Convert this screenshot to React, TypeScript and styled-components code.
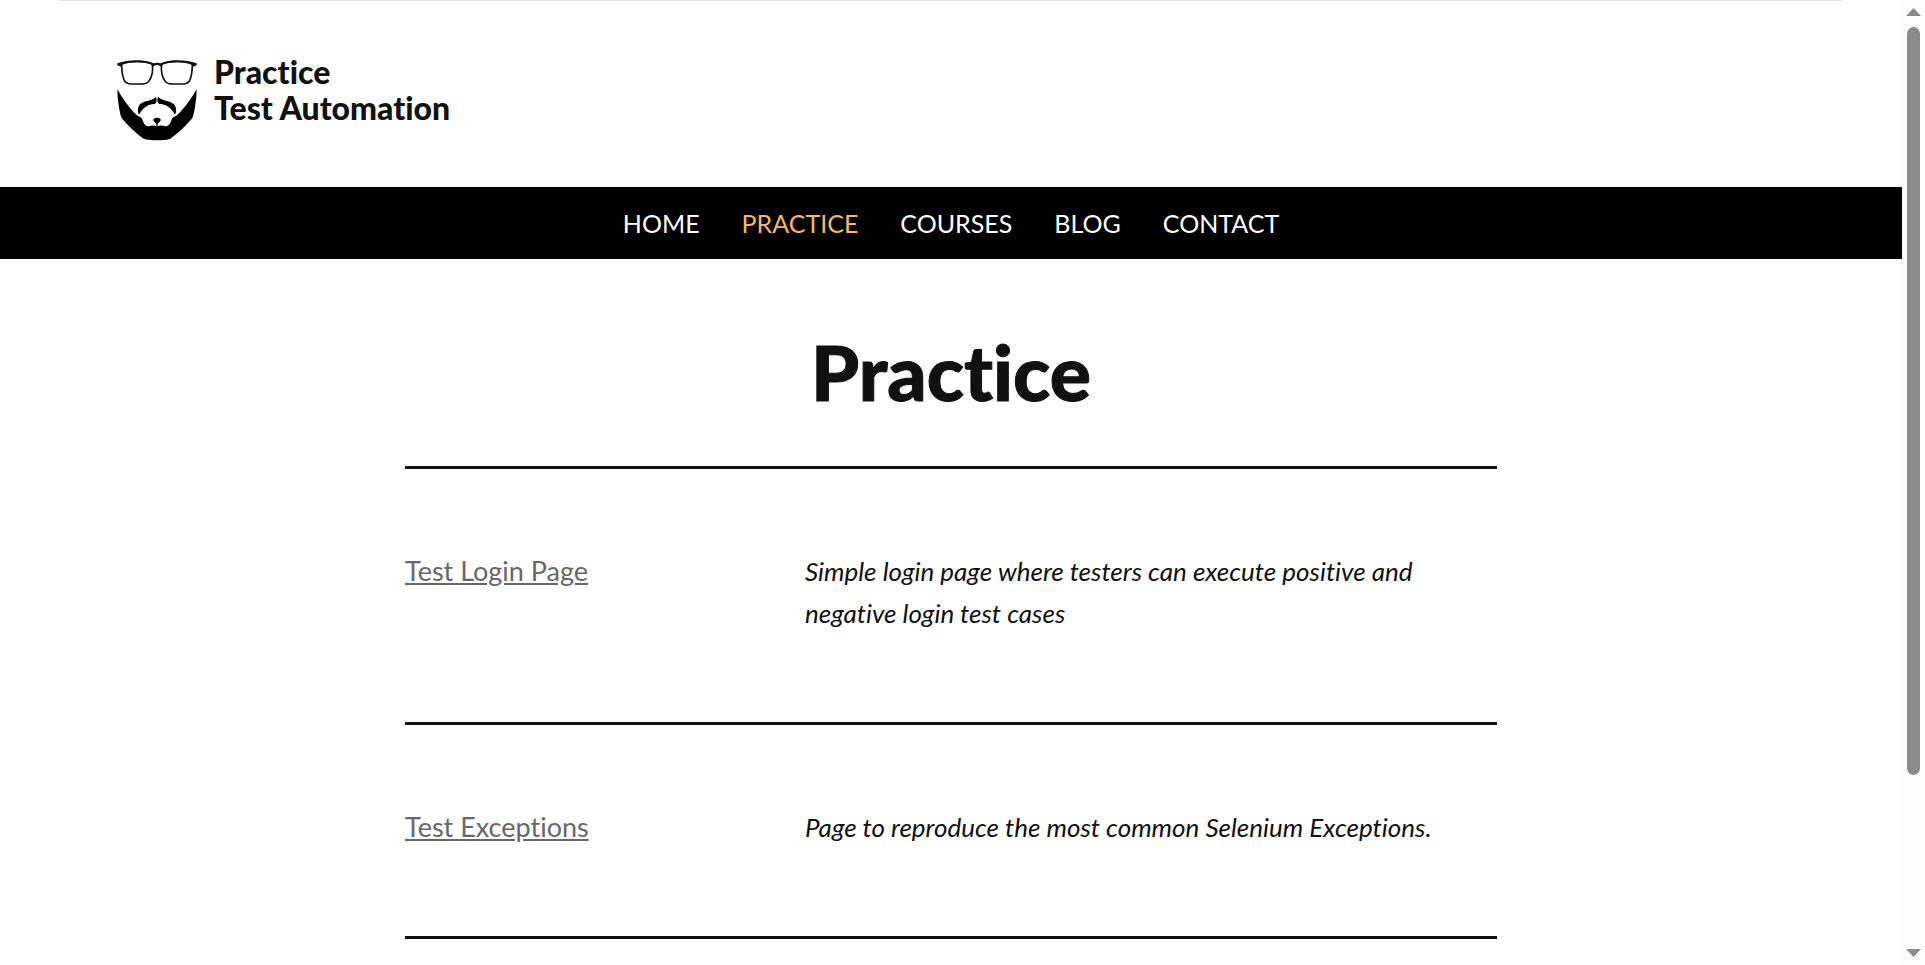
import React from "react";
import styled, { createGlobalStyle } from "styled-components";

const GlobalStyle = createGlobalStyle`
  *, *::before, *::after { box-sizing: border-box; }
  body {
    margin: 0;
    background: #ffffff;
    color: #111111;
    font-family: Lato, "Open Sans", sans-serif;
    font-size: 26px;
    font-variant-ligatures: none;
    line-height: 42px;
  }
`;

const Window = styled.div`
  display: flex;
  height: 100vh;
  overflow: hidden;
`;

const Page = styled.div`
  flex: 1;
  min-width: 0;
  overflow-y: auto;
  scrollbar-width: none;
`;

const Header = styled.header`
  margin: 0 59px;
  padding: 57px 58px 45px;
  border-top: 1px solid #e6e6e6;
`;

const Brand = styled.a`
  display: inline-flex;
  gap: 17px;
  color: #111111;
  font-size: 32px;
  font-weight: 900;
  line-height: 36px;
  text-decoration: none;
  vertical-align: top;
`;

const Face = styled.svg`
  display: block;
  width: 80px;
  height: 84px;
`;

const BrandName = styled.span`
  margin-top: -4px;
`;

const Nav = styled.nav`
  background: #000000;
`;

const Menu = styled.ul`
  display: flex;
  justify-content: center;
  gap: 42px;
  margin: 0;
  padding: 15px 0;
  font-size: 25px;
  list-style: none;
`;

const MenuLink = styled.a<{ $active?: boolean }>`
  color: ${(p) => (p.$active ? "#fbb85c" : "#ffffff")};
  text-decoration: none;
  text-transform: uppercase;
`;

const Content = styled.main`
  max-width: 1092px;
  margin: 0 auto;
  padding-top: 64px;
`;

const Title = styled.h1`
  margin: 0 0 47px;
  font-size: 77px;
  font-weight: 900;
  line-height: 96px;
  text-align: center;
  -webkit-text-stroke: 1px #111111;
`;

const Entry = styled.section`
  display: grid;
  grid-template-columns: 1fr 2fr;
  gap: 54px;
  padding: 81px 0 88px;
  border-top: 3px solid #111111;
`;

const EntryLink = styled.a`
  color: #686868;
  font-size: 27px;
  text-decoration: underline;
`;

const Description = styled.p`
  margin: 0;
  font-style: italic;
`;

const Rail = styled.div`
  display: flex;
  flex-direction: column;
  align-items: center;
  width: 23px;
  padding: 8px 0;
  background: #fcfcfc;
`;

const Track = styled.div`
  flex: 1;
  width: 13px;
  margin: 11px 0 10px;
`;

const Thumb = styled.div`
  height: 82%;
  border-radius: 7px;
  background: #8b8b8b;
`;

const Arrow = styled.svg`
  display: block;
  width: 15px;
  height: 8px;
  fill: #8b8b8b;
`;

const menu = ["Home", "Practice", "Courses", "Blog", "Contact"];

const entries = [
  {
    name: "Test Login Page",
    text: "Simple login page where testers can execute positive and negative login test cases",
  },
  {
    name: "Test Exceptions",
    text: "Page to reproduce the most common Selenium Exceptions.",
  },
];

function BeardLogo() {
  return (
    <Face viewBox="21 24 240 252" aria-hidden="true">
      <g fill="none" stroke="#111" strokeWidth="5" strokeLinejoin="round">
        <path d="M35 43C55 32 105 31 127 43C129 58 126 80 117 93C113 101 105 102 84 102C62 102 51 103 44 94C39 84 35 60 35 43Z" />
        <path d="M247 43C227 32 177 31 155 43C153 58 156 80 165 93C169 101 177 102 198 102C220 102 231 103 238 94C243 84 247 60 247 43Z" />
      </g>
      <path
        d="M22 40C55 28 105 28 130 40Q141 37 152 40C177 28 227 28 260 40V46L249 50L244 43C224 35 180 35 158 43L154 51Q149 45 141 45Q133 45 128 51L124 43C102 35 58 35 38 43L33 50L22 46Z"
        fill="#111"
      />
      <path
        d="M23 118C30 135 65 185 83 197C90 201 92 199 97 208C101 222 106 229 116 229C125 226 132 226 141 229C150 226 157 226 166 229C176 229 181 222 185 208C190 199 192 201 199 197C217 185 252 135 259 118C262 130 254 187 248 202C238 219 196 257 181 266C166 272 116 272 101 266C86 257 44 219 34 202C28 187 20 130 23 118Z"
        fill="#000"
      />
      <path
        d="M137 140C142 147 140 159 134 162C117 161 99 172 87 194C81 184 83 170 91 162C102 151 128 153 137 140ZM145 140C154 153 180 151 191 162C199 170 201 184 195 194C183 172 165 161 148 162C142 159 140 147 145 140Z"
        fill="#000"
      />
      <path
        d="M131 206Q141 201 151 206Q155 211 149 215Q146 219 143 221V228H139V221Q136 219 133 215Q127 211 131 206Z"
        fill="#000"
      />
    </Face>
  );
}

export default function App() {
  return (
    <>
      <GlobalStyle />
      <Window>
        <Page>
          <Header>
            <Brand href="#home">
              <BeardLogo />
              <BrandName>
                Practice
                <br />
                Test Automation
              </BrandName>
            </Brand>
          </Header>
          <Nav aria-label="Main">
            <Menu>
              {menu.map((item) => (
                <li key={item}>
                  <MenuLink href={`#${item.toLowerCase()}`} $active={item === "Practice"}>
                    {item}
                  </MenuLink>
                </li>
              ))}
            </Menu>
          </Nav>
          <Content>
            <Title>Practice</Title>
            {entries.map((entry) => (
              <Entry key={entry.name}>
                <div>
                  <EntryLink href="#entry">{entry.name}</EntryLink>
                </div>
                <Description>{entry.text}</Description>
              </Entry>
            ))}
            <Entry />
          </Content>
        </Page>
        <Rail aria-hidden="true">
          <Arrow viewBox="0 0 15 8">
            <path d="M7.500 0L15 8H0Z" />
          </Arrow>
          <Track>
            <Thumb />
          </Track>
          <Arrow viewBox="0 0 15 8">
            <path d="M0 0H15L7.500 8Z" />
          </Arrow>
        </Rail>
      </Window>
    </>
  );
}
